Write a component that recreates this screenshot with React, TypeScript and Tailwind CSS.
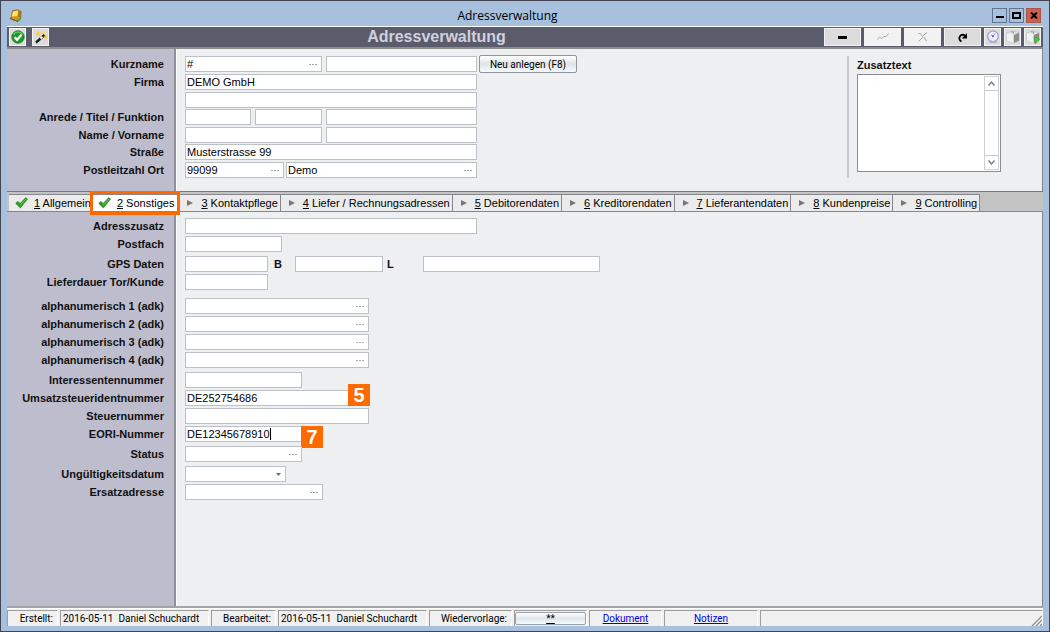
import { useState } from 'react'
import type { ReactNode } from 'react'
import clsx from 'clsx'

// ── types ──
interface FieldDef {
  id: string
  width: string
  label?: string
  value?: string
  lookup?: boolean
  select?: boolean
  caret?: boolean
  badge?: string
  // small caption drawn in front of the field
  prefix?: string
  prefixClass?: string
}

interface RowDef {
  label: string
  fields: FieldDef[]
  gap?: string
  action?: string
}

interface GroupDef {
  key: string
  spacing: string
  rows: RowDef[]
}

// ── form definitions ──
const headerGroups: GroupDef[] = [
  {
    key: 'firma',
    spacing: '',
    rows: [
      {
        label: 'Kurzname',
        action: 'Neu anlegen (F8)',
        fields: [
          { id: 'kurzname', width: 'w-[137px]', value: '#', lookup: true },
          { id: 'kurzname2', width: 'w-[151px]' },
        ],
      },
      { label: 'Firma', fields: [{ id: 'firma', width: 'w-[292px]', value: 'DEMO GmbH' }] },
      { label: '', fields: [{ id: 'firma2', width: 'w-[292px]' }] },
    ],
  },
  {
    key: 'person',
    spacing: 'mt-px',
    rows: [
      {
        label: 'Anrede / Titel / Funktion',
        fields: [
          { id: 'anrede', width: 'w-[66px]' },
          { id: 'titel', width: 'w-[67px]' },
          { id: 'funktion', width: 'w-[151px]' },
        ],
      },
      {
        label: 'Name / Vorname',
        fields: [
          { id: 'name', width: 'w-[137px]' },
          { id: 'vorname', width: 'w-[151px]' },
        ],
      },
    ],
  },
  {
    key: 'adresse',
    spacing: 'mt-px',
    rows: [
      { label: 'Straße', fields: [{ id: 'strasse', width: 'w-[292px]', value: 'Musterstrasse 99' }] },
      {
        label: 'Postleitzahl Ort',
        gap: 'gap-0.5',
        fields: [
          { id: 'plz', width: 'w-[99px]', value: '99099', lookup: true },
          { id: 'ort', width: 'w-[191px]', value: 'Demo', lookup: true },
        ],
      },
    ],
  },
]

const detailGroups: GroupDef[] = [
  {
    key: 'post',
    spacing: '',
    rows: [
      { label: 'Adresszusatz', fields: [{ id: 'adresszusatz', width: 'w-[292px]' }] },
      { label: 'Postfach', fields: [{ id: 'postfach', width: 'w-[97px]' }] },
    ],
  },
  {
    key: 'gps',
    spacing: 'mt-1',
    rows: [
      {
        label: 'GPS Daten',
        gap: 'gap-0',
        fields: [
          { id: 'gps', width: 'w-[83px]' },
          { id: 'gps-b', width: 'w-[88px]', prefix: 'B', prefixClass: 'w-[27px] pl-1.5' },
          { id: 'gps-l', width: 'w-[177px]', prefix: 'L', prefixClass: 'w-10 pl-1' },
        ],
      },
      { label: 'Lieferdauer Tor/Kunde', fields: [{ id: 'lieferdauer', width: 'w-[83px]' }] },
    ],
  },
  {
    key: 'adk',
    spacing: 'mt-2',
    rows: [1, 2, 3, 4].map((n) => ({
      label: `alphanumerisch ${n} (adk)`,
      fields: [{ id: `adk${n}`, width: 'w-[184px]', lookup: true }],
    })),
  },
  {
    key: 'nummern',
    spacing: 'mt-1',
    rows: [
      { label: 'Interessentennummer', fields: [{ id: 'interessent', width: 'w-[117px]' }] },
      {
        label: 'Umsatzsteueridentnummer',
        fields: [{ id: 'ustid', width: 'w-[184px]', value: 'DE252754686', badge: '5' }],
      },
      { label: 'Steuernummer', fields: [{ id: 'steuernr', width: 'w-[184px]' }] },
      {
        label: 'EORI-Nummer',
        fields: [{ id: 'eori', width: 'w-[117px]', value: 'DE12345678910', caret: true, badge: '7' }],
      },
    ],
  },
  {
    key: 'status',
    spacing: 'mt-1',
    rows: [{ label: 'Status', fields: [{ id: 'status', width: 'w-[117px]', lookup: true }] }],
  },
  {
    key: 'ersatz',
    spacing: 'mt-1',
    rows: [
      { label: 'Ungültigkeitsdatum', fields: [{ id: 'ungueltig', width: 'w-[101px]', select: true }] },
      { label: 'Ersatzadresse', fields: [{ id: 'ersatzadresse', width: 'w-[138px]', lookup: true }] },
    ],
  },
]

const tabs = [
  { label: 'Allgemein', done: true, spacing: 'gap-1.5 pl-1.5' },
  { label: 'Sonstiges', done: true, spacing: 'gap-1.5 pl-1.5 pr-1' },
  { label: 'Kontaktpflege' },
  { label: 'Liefer / Rechnungsadressen' },
  { label: 'Debitorendaten' },
  { label: 'Kreditorendaten' },
  { label: 'Lieferantendaten' },
  { label: 'Kundenpreise' },
  { label: 'Controlling' },
]

// ── icons ──
function BellIcon() {
  return (
    <svg width="14" height="14" viewBox="0 0 14 14">
      <path d="M3.5 1.8 9 .8l3.2 1.8-.6 6.6L9 12.4 1 9.600l1.600-2z" fill="#c99a1c" stroke="#7d6021" strokeWidth=".8" />
      <path d="M4 2.400 9 1.600 8.400 7 2.800 7.600z" fill="#ffe56b" />
      <path d="m9.600 2 2 1-.5 5.600-2-1.400z" fill="#a9760d" />
      <path d="m1.200 9.600 7.600 2.800 3-3.200" fill="none" stroke="#8a4a20" />
      <path d="m9.400 9.800 2.400-.8-.6 2.800-2 .6z" fill="#3cb832" />
    </svg>
  )
}

function OkIcon() {
  return (
    <svg width="14" height="14" viewBox="0 0 14 14">
      <circle cx="7" cy="7" r="6.2" fill="#1e9a2b" stroke="#0f7a1c" strokeWidth=".8" />
      <path d="M2.4 4.8a5.2 5.2 0 0 1 9.2 0" fill="none" stroke="#6fce6c" strokeWidth="1.2" />
      <path d="m3.6 7.2 2.5 2.6 4.4-5" fill="none" stroke="#fff" strokeWidth="2.2" />
    </svg>
  )
}

function WandIcon() {
  return (
    <svg width="14" height="14" viewBox="0 0 14 14" className="shrink-0">
      <path d="m2 12.5 8.500-7.500" stroke="#1b1b1b" strokeWidth="2.400" />
      <path d="m6.400 8.600 2-1.800" stroke="#fff" strokeWidth="2" />
      <path d="m4.200.6 1 2 2.200.3-1.600 1.500.4 2.200-2-1.100-2 1.100.4-2.200L1 2.900l2.200-.3z" fill="#f6cf4a" />
      <path d="m9.200 0 .8 1.500 1.700.2-1.200 1.200.3 1.600-1.600-.8-1.500.8.3-1.600-1.200-1.200 1.700-.2z" fill="#f9dc62" />
      <path d="m11.800 4.800.7 1.300 1.400.2-1 1 .2 1.500-1.300-.7-1.300.7.2-1.500-1-1 1.400-.2z" fill="#f0c43a" />
    </svg>
  )
}

function ClockIcon() {
  return (
    <svg width="14" height="14" viewBox="0 0 14 14" className="shrink-0">
      <path d="m4 10-1.500 3h9L10 10z" fill="#b9b9c9" />
      <circle cx="7" cy="6.300" r="5.300" fill="#eeeeff" stroke="#a6a6dc" strokeWidth="1.400" />
      <path d="M9 3.600 7 6.300l-2-1.500" fill="none" stroke="#8585c4" />
      <circle cx="7" cy="6.300" r="1" fill="#5a5ab4" />
    </svg>
  )
}

function BoxIcon({ arrow }: { arrow?: boolean }) {
  return (
    <svg width="14" height="14" viewBox="0 0 14 14" className="shrink-0">
      <path d="m1 3 5-2 7 1.500v8L7.500 13 1 10.500z" fill="#e6e6e6" stroke="#b4b4b4" strokeWidth=".6" />
      <path d="M7.500 5 13 3v7.500L7.500 13z" fill="#8b8b8b" />
      <path d="m1 3 6.500 2v8L1 10.500z" fill="#f0f0f0" />
      <path d="m5 1.800 2.600.4v1.600" fill="none" stroke="#67ab9b" />
      {arrow && <path d="M8 7l5.800 2L9.400 14z" fill="#4cc63c" stroke="#35972b" strokeWidth=".5" />}
    </svg>
  )
}

function CheckIcon() {
  return (
    <svg width="13" height="12" viewBox="0 0 13 12" className="shrink-0">
      <path d="M.8 6.400 3 4.400l2.200 2.200L10.600.8l1.800 1.200-7 8.800z" fill="#2fa31f" stroke="#1a7a12" strokeWidth=".8" />
      <path d="m5.300 8 5.400-6" stroke="#6fd55a" strokeWidth=".8" />
    </svg>
  )
}

function TriangleIcon() {
  return (
    <svg width="6" height="6" viewBox="0 0 6 6" className="shrink-0">
      <path d="M0 0v6l6-3z" fill="#777" />
    </svg>
  )
}

function DotsIcon() {
  return (
    <svg width="8" height="3" viewBox="0 0 8 3">
      <path d="M0 1.500h2M3 1.500h2M6 1.500h2" stroke="#a4a7ac" />
    </svg>
  )
}

// ── form parts ──
function Field({ id, label, width, value, lookup, select, caret, badge }: FieldDef) {
  return (
    <div
      className={clsx(
        'relative flex h-4 shrink-0 items-center border border-[#bcc0c7] bg-white text-[11px]',
        width,
      )}
    >
      {select ? (
        <>
          <select id={id} aria-label={label} className="h-full w-full appearance-none bg-transparent outline-none">
            <option value=""></option>
          </select>
          <svg width="5" height="3" viewBox="0 0 5 3" className="pointer-events-none absolute top-1.5 right-1">
            <path d="M0 0h5L2.500 3z" fill="#6b6e73" />
          </svg>
        </>
      ) : (
        <input
          id={id}
          aria-label={label}
          defaultValue={value}
          className={clsx(
            'h-full bg-transparent pl-px text-black outline-none',
            caret ? 'field-sizing-content' : 'w-full min-w-0 flex-1',
          )}
        />
      )}
      {caret && <span className="h-3 w-px bg-black" />}
      {lookup && (
        <button type="button" aria-label="Auswahl" className="flex h-full w-3 shrink-0 items-center">
          <DotsIcon />
        </button>
      )}
      {badge && (
        <span
          className={clsx(
            'absolute flex size-[22px] items-center justify-center bg-[#ff6a00] text-xl font-bold text-white',
            caret ? '-top-px left-full' : '-right-0.5 -bottom-px',
          )}
        >
          {badge}
        </span>
      )}
    </div>
  )
}

function FormPanel({ groups, className, children }: { groups: GroupDef[]; className: string; children?: ReactNode }) {
  return (
    <div className="flex flex-1 border-r border-[#85878c] bg-[#eeeff1]">
      <div
        className={clsx(
          'w-[169px] shrink-0 border-r-2 border-[#8e8f99] bg-[#bdbdce] pr-2.5 text-right text-[11px] font-bold text-[#111]',
          className,
        )}
      >
        {groups.map((group) => (
          <div key={group.key} className={clsx('flex flex-col gap-0.5', group.spacing)}>
            {group.rows.map((row) => (
              <label key={row.fields[0].id} htmlFor={row.fields[0].id} className="block h-4 leading-4 whitespace-nowrap">
                {row.label}
              </label>
            ))}
          </div>
        ))}
      </div>
      <div className={clsx('min-w-0 flex-1 border-l border-white pl-2', className)}>
        {groups.map((group) => (
          <div key={group.key} className={clsx('flex flex-col gap-0.5', group.spacing)}>
            {group.rows.map((row) => (
              <div key={row.fields[0].id} className={clsx('flex h-4 items-center', row.gap ?? 'gap-1')}>
                {row.fields.map((field, i) => (
                  <div key={field.id} className="flex items-center">
                    {field.prefix && (
                      <span className={clsx('text-[11px] font-bold text-[#111]', field.prefixClass)}>
                        {field.prefix}
                      </span>
                    )}
                    <Field {...field} label={i > 0 || !row.label ? field.id : undefined} />
                  </div>
                ))}
                {row.action && (
                  <button
                    type="button"
                    className="-ml-0.5 h-[18px] w-[98px] shrink-0 rounded-xs border border-[#8e959e] bg-linear-to-b from-white via-[#dfe5eb] to-[#f7f9fa] font-[Roboto,sans-serif] text-[10px] text-black"
                  >
                    {row.action}
                  </button>
                )}
              </div>
            ))}
          </div>
        ))}
      </div>
      {children}
    </div>
  )
}

function ScrollArrow({ up }: { up?: boolean }) {
  return (
    <button
      type="button"
      aria-label={up ? 'Nach oben' : 'Nach unten'}
      className={clsx(
        'flex h-[14px] items-center justify-center border-[#c9c9c9] bg-white',
        up ? 'border-b' : 'border-t',
      )}
    >
      <svg width="7" height="5" viewBox="0 0 7 5">
        <path d={up ? 'M.5 4.500 3.500 1l3 3.500' : 'M.5.5 3.500 4l3-3.500'} fill="none" stroke="#777" strokeWidth="1.300" />
      </svg>
    </button>
  )
}

function ToolButton({ label, wide, disabled, children }: { label: string; wide?: boolean; disabled?: boolean; children: ReactNode }) {
  return (
    <button
      type="button"
      aria-label={label}
      disabled={disabled}
      className={clsx(
        'flex h-[18px] items-center justify-center border border-[#f3f3f3]',
        wide ? 'w-[37px]' : 'w-[17px]',
        disabled ? 'bg-[#f2f2f2]' : 'bg-[#dcdcdc]',
      )}
    >
      {children}
    </button>
  )
}

function StatusCell({ className, children }: { className: string; children?: ReactNode }) {
  return (
    <div
      className={clsx(
        'flex h-4 shrink-0 items-center border-t border-r border-l border-t-[#9d9d9d] border-r-white border-l-[#9d9d9d] bg-[#f0f0f0] whitespace-pre',
        className,
      )}
    >
      {children}
    </div>
  )
}

export default function App() {
  const [active, setActive] = useState(1)

  return (
    <div className="flex min-h-screen flex-col border border-[#43444f] bg-[#a6c0dd] px-1.5 pb-[5px] font-['Liberation_Sans',Arial,sans-serif] text-black">
      {/* Title bar */}
      <header className="flex h-[25px] items-center pt-1 pr-0.5 pl-0.5">
        <BellIcon />
        <h1 className="flex-1 text-center font-['Open_Sans','Noto_Sans',sans-serif] text-xs">Adressverwaltung</h1>
        <div className="flex gap-0.5">
          <button type="button" aria-label="Minimieren" className="flex size-[15px] items-center justify-center border border-[#5f7591]">
            <svg width="8" height="8" viewBox="0 0 8 8"><path d="M0 5h8" stroke="#000" strokeWidth="2" /></svg>
          </button>
          <button type="button" aria-label="Maximieren" className="flex size-[15px] items-center justify-center border border-[#5f7591]">
            <svg width="9" height="7" viewBox="0 0 9 7"><path d="M1 1h7v5H1z" fill="none" stroke="#000" strokeWidth="2" /></svg>
          </button>
          <button type="button" aria-label="Schließen" className="flex size-[15px] items-center justify-center border border-[#a9564b] bg-[#cf5f4d]">
            <svg width="8" height="7" viewBox="0 0 8 7"><path d="m1 .5 6 6M7 .5l-6 6" stroke="#000" strokeWidth="2" /></svg>
          </button>
        </div>
      </header>

      {/* Toolbar */}
      <div className="flex h-[23px] items-center border-t border-b-2 border-t-white border-b-[#8c8c8c] bg-[#5b5c6b] px-0.5">
        <div className="flex gap-1.5">
          <ToolButton label="Speichern"><OkIcon /></ToolButton>
          <ToolButton label="Assistent"><WandIcon /></ToolButton>
        </div>
        <h2 className="flex-1 text-center text-base leading-5 font-bold text-[#d0d0e0]">Adressverwaltung</h2>
        <div className="flex gap-[3px]">
          <ToolButton label="Löschen" wide>
            <svg width="9" height="3" viewBox="0 0 9 3"><path d="M0 1.500h9" stroke="#000" strokeWidth="3" /></svg>
          </ToolButton>
          <ToolButton label="Übernehmen" wide disabled>
            <svg width="12" height="8" viewBox="0 0 12 8"><path d="M.5 6.500 2.500 4l2 1.500L7 3.500h2l2.500-3" fill="none" stroke="#a9a9a9" /></svg>
          </ToolButton>
          <ToolButton label="Verwerfen" wide disabled>
            <svg width="10" height="10" viewBox="0 0 10 10"><path d="M.5 1.500h2l2 3L7 2 9 .5M4.500 4.500v1L2 8 .5 9.500M5.500 5.500h1L7.500 8l1.500.5" fill="none" stroke="#a9a9a9" /></svg>
          </ToolButton>
          <ToolButton label="Aktualisieren" wide>
            <svg width="11" height="11" viewBox="0 0 11 11">
              <path d="M4.500 9.500A3.500 3.500 0 1 1 8.500 4" fill="none" stroke="#000" strokeWidth="1.800" />
              <path d="M10 1v5.500H4.800z" fill="#000" />
            </svg>
          </ToolButton>
          <ToolButton label="Wiedervorlage"><ClockIcon /></ToolButton>
          <ToolButton label="Paket"><BoxIcon /></ToolButton>
          <ToolButton label="Paket starten"><BoxIcon arrow /></ToolButton>
        </div>
      </div>

      <main className="flex flex-1 flex-col">
        {/* Address header */}
        <section className="flex border-b border-[#77787f]">
          <FormPanel groups={headerGroups} className="pt-[7px] pb-[13px]">
            <div className="mt-[7px] mb-[13px] flex w-[195px] shrink-0 flex-col border-l-2 border-[#c6c8cb] pl-2">
              <label htmlFor="zusatztext" className="h-[18px] text-[11px] leading-[18px] font-bold text-[#111]">
                Zusatztext
              </label>
              <div className="flex h-[98px] w-36 border border-[#8b8d92] bg-white p-px">
                <textarea id="zusatztext" className="min-w-0 flex-1 resize-none text-[11px] outline-none" />
                <div className="flex w-[15px] flex-col justify-between border border-[#d0d0d0]">
                  <ScrollArrow up />
                  <ScrollArrow />
                </div>
              </div>
            </div>
          </FormPanel>
        </section>

        {/* Tabs */}
        <div role="tablist" className="flex h-5 items-end border-b border-[#85878c] bg-[#c3c3c3] pl-0.5">
          {tabs.map((tab, i) => (
            <button
              key={tab.label}
              type="button"
              role="tab"
              aria-selected={active === i}
              onClick={() => setActive(i)}
              className={clsx(
                'relative flex h-[17px] items-center border-t border-r border-[#85878c] text-[11px] leading-4 whitespace-nowrap',
                active === i ? 'bg-white' : 'bg-[#ebebec]',
                tab.spacing ?? 'gap-2 pr-0.5 pl-2',
              )}
            >
              {tab.done ? <CheckIcon /> : <TriangleIcon />}
              <span>
                <span className="underline">{i + 1}</span> {tab.label}
              </span>
              {active === i && (
                <span className="pointer-events-none absolute -inset-x-0.5 -top-1 -bottom-1 z-10 border-[3px] border-[#ff6a00]" />
              )}
            </button>
          ))}
        </div>

        {/* Details */}
        <section className="flex flex-1 border-b-2 border-[#a3a4a8]">
          <FormPanel groups={detailGroups} className="pt-1.5 pb-4" />
        </section>
      </main>

      {/* Status bar */}
      <footer className="flex h-[18px] items-end gap-0.5 border-t border-white bg-[#f0f0f0] font-[Roboto,'Open_Sans',sans-serif] text-[10px]">
        <StatusCell className="w-[51px] justify-end pr-1">Erstellt:</StatusCell>
        <StatusCell className="w-[149px] pl-0.5">2016-05-11  Daniel Schuchardt</StatusCell>
        <StatusCell className="w-[65px] justify-end pr-1">Bearbeitet:</StatusCell>
        <StatusCell className="w-[149px] pl-0.5">2016-05-11  Daniel Schuchardt</StatusCell>
        <StatusCell className="w-[83px] justify-end pr-1">Wiedervorlage:</StatusCell>
        <StatusCell className="w-[73px]">
          <button
            type="button"
            className="h-[13px] w-full rounded-xs border border-[#9aa0a8] bg-linear-to-b from-white via-[#dfe5eb] to-[#f7f9fa] leading-3 underline"
          >
            **
          </button>
        </StatusCell>
        <StatusCell className="w-[73px] justify-center">
          <a href="#dokument" className="text-[#0000ee] underline">Dokument</a>
        </StatusCell>
        <StatusCell className="w-[94px] justify-center">
          <a href="#notizen" className="text-[#0000ee] underline">Notizen</a>
        </StatusCell>
        <StatusCell className="min-w-0 flex-1 items-end justify-end">
          <svg width="11" height="11" viewBox="0 0 11 11">
            <path d="m1 11 10-10M5 11l6-6M9 11l2-2" stroke="#8a8a8a" strokeWidth="1.200" />
          </svg>
        </StatusCell>
      </footer>
    </div>
  )
}
